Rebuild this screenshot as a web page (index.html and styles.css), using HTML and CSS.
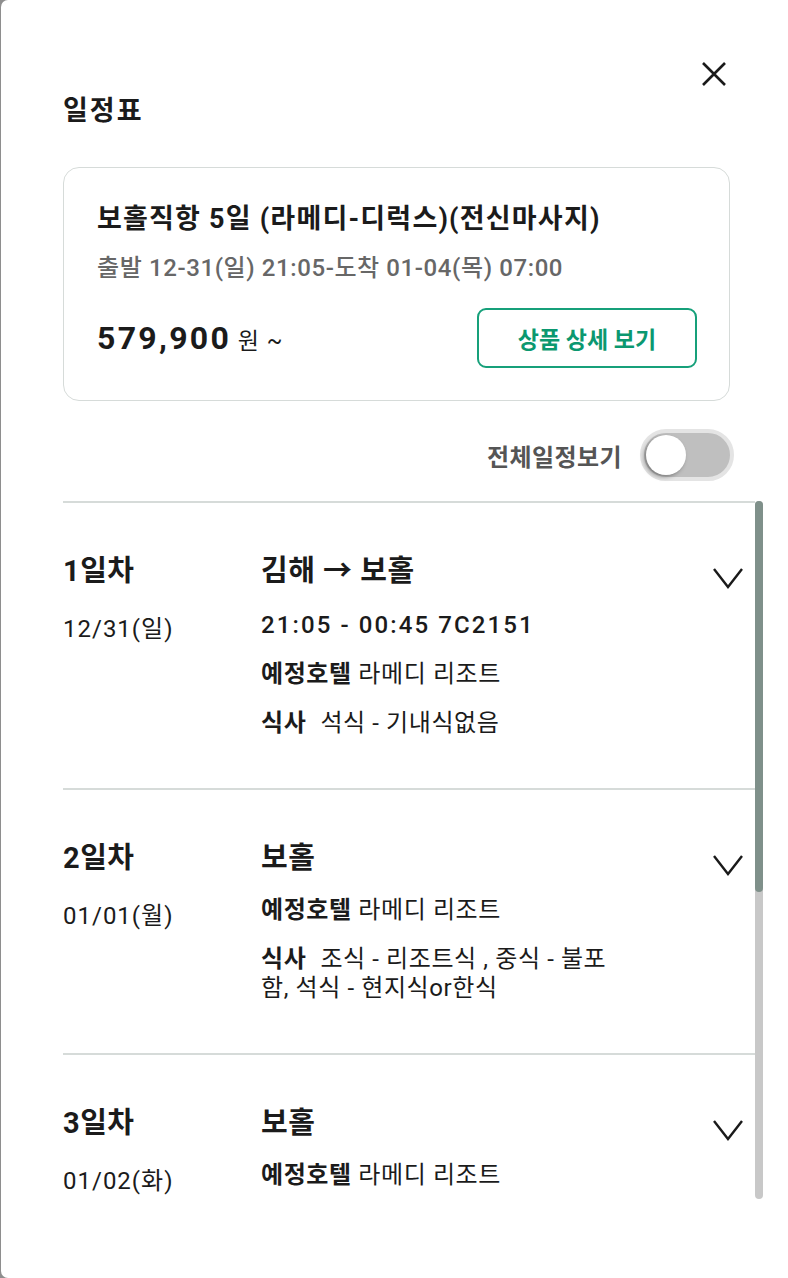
FILE: index.html
```html
<!DOCTYPE html>
<html lang="ko">
<head>
    <meta charset="utf-8">
    <title>일정표</title>
    <link rel="stylesheet" href="styles.css">
</head>
<body>
    <div class="sheet">
        <!-- 상단 헤더 -->
        <header class="sheet-head">
            <button class="close-btn" aria-label="닫기">
                <svg width="28" height="28" viewBox="0 0 28 28"><path d="M3 3L25 25M25 3L3 25" stroke="#1a1a1a" stroke-width="2.6" fill="none"/></svg>
            </button>
            <h1 class="sheet-title">일정표</h1>
        </header>

        <!-- 상품 카드 -->
        <section class="product-card">
            <h2 class="product-name">보홀직항 5일 (라메디-디럭스)(전신마사지)</h2>
            <p class="product-time">출발 12-31(일) 21:05-도착 01-04(목) 07:00</p>
            <div class="product-foot">
                <p class="price"><strong>579,900</strong> 원 ~</p>
                <a class="detail-btn" href="#">상품 상세 보기</a>
            </div>
        </section>

        <div class="toggle-row">
            <span class="toggle-label">전체일정보기</span>
            <span class="switch"><span class="knob"></span></span>
        </div>

        <!-- 일자별 일정 -->
        <div class="list-wrap">
            <div class="day-list">
                <div class="day">
                    <div class="day-when">
                        <div class="day-num">1일차</div>
                        <div class="day-date">12/31(일)</div>
                    </div>
                    <div class="day-body">
                        <div class="day-place">김해 → 보홀</div>
                        <div class="day-row flight">21:05 - 00:45 7C2151</div>
                        <div class="day-row"><b>예정호텔</b> 라메디 리조트</div>
                        <div class="day-row"><b class="meal">식사</b>석식 - 기내식없음</div>
                    </div>
                    <svg class="chevron" viewBox="0 0 32 26"><path d="M2 4L16 22L30 4" stroke="#1a1a1a" stroke-width="2.4" fill="none"/></svg>
                </div>
                <div class="day">
                    <div class="day-when">
                        <div class="day-num">2일차</div>
                        <div class="day-date">01/01(월)</div>
                    </div>
                    <div class="day-body">
                        <div class="day-place">보홀</div>
                        <div class="day-row"><b>예정호텔</b> 라메디 리조트</div>
                        <div class="day-row"><b class="meal">식사</b>조식 - 리조트식 , 중식 - 불포함, 석식 - 현지식or한식</div>
                    </div>
                    <svg class="chevron" viewBox="0 0 32 26"><path d="M2 4L16 22L30 4" stroke="#1a1a1a" stroke-width="2.4" fill="none"/></svg>
                </div>
                <div class="day">
                    <div class="day-when">
                        <div class="day-num">3일차</div>
                        <div class="day-date">01/02(화)</div>
                    </div>
                    <div class="day-body">
                        <div class="day-place">보홀</div>
                        <div class="day-row"><b>예정호텔</b> 라메디 리조트</div>
                    </div>
                    <svg class="chevron" viewBox="0 0 32 26"><path d="M2 4L16 22L30 4" stroke="#1a1a1a" stroke-width="2.4" fill="none"/></svg>
                </div>
            </div>
            <div class="scrollbar"><div class="scroll-thumb"></div></div>
        </div>
    </div>
</body>
</html>
```

FILE: styles.css
```css
/* 기본 */
* { box-sizing: border-box; }
body {
    margin: 0;
    background: #8e8e8e;
    font-family: Roboto, "Noto Sans CJK KR", sans-serif;
    color: #1b1b1b;
}
p, h1, h2 { margin: 0; }

.sheet {
    margin-left: 1px;
    height: 1278px;
    background: #fff;
    border-radius: 7px 0 0 7px;
    padding: 60px 58px 0 62px;
    overflow: hidden;
}

/* 헤더 */
.sheet-head {
    display: flex;
    flex-direction: column;
}
.close-btn {
    align-self: flex-end;
    width: 28px;
    height: 28px;
    padding: 0;
    border: 0;
    background: none;
    margin-right: 2px;
}
.close-btn svg { display: block; }
.sheet-title {
    margin-top: 5px;
    font-size: 27px;
    line-height: 36px;
    font-weight: 700;
    letter-spacing: 2px;
}

/* 상품 카드 */
.product-card {
    margin-top: 38px;
    border: 1.5px solid #d6dbd9;
    border-radius: 16px;
    padding: 33px 32px 32px 33px;
}
.product-name {
    font-size: 27px;
    line-height: 36px;
    font-weight: 700;
    letter-spacing: 1.2px;
}
.product-time {
    margin-top: 17px;
    font-size: 24px;
    line-height: 28px;
    font-weight: 500;
    letter-spacing: 0.6px;
    color: #676767;
}
.product-foot {
    margin-top: 26px;
    display: flex;
    align-items: center;
    justify-content: space-between;
}
.price {
    font-size: 23px;
    letter-spacing: 1px;
}
.price strong {
    font-size: 32px;
    font-weight: 700;
    letter-spacing: 2.3px;
}
.detail-btn {
    width: 220px;
    height: 60px;
    display: flex;
    align-items: center;
    justify-content: center;
    border: 2px solid #16a07a;
    border-radius: 9px;
    color: #0b9870;
    font-size: 23px;
    font-weight: 700;
    text-decoration: none;
}

/* 전체일정 토글 */
.toggle-row {
    margin-top: 28px;
    margin-right: -4px;
    display: flex;
    align-items: center;
    justify-content: flex-end;
    gap: 18px;
}
.toggle-label {
    font-size: 24px;
    font-weight: 700;
    letter-spacing: 0.4px;
    color: #555;
}
.switch {
    width: 94px;
    height: 52px;
    border-radius: 26px;
    border: 4px solid #e4e4e4;
    background: #bfbfbf;
    display: flex;
    align-items: center;
    padding-left: 2px;
}
.knob {
    width: 40px;
    height: 40px;
    border-radius: 50%;
    background: #fff;
    box-shadow: -2px 2px 4px rgba(0, 0, 0, 0.35);
}

/* 일정 목록 + 스크롤바 */
.list-wrap {
    margin-top: 20px;
    margin-right: -33px;
    height: 698px;
    display: flex;
}
.day-list {
    flex: 1;
    overflow: hidden;
}
.scrollbar {
    flex: 0 0 8px;
    background: #c8c8c8;
    border-radius: 4px;
}
.scroll-thumb {
    height: 391px;
    background: #7f908a;
    border-radius: 4px;
}

.day {
    display: flex;
    align-items: flex-start;
    border-top: 2px solid #d6dbd9;
    padding: 50px 11px 50px 0;
}
.day-when {
    flex: 0 0 198px;
}
.day-num, .day-place {
    font-size: 29px;
    line-height: 36px;
    font-weight: 700;
    letter-spacing: 0.5px;
}
.day-date {
    margin-top: 26px;
    font-size: 24px;
    line-height: 29px;
    letter-spacing: 1px;
}
.day-body {
    flex: 0 0 372px;
}
.day-row {
    margin-top: 20px;
    font-size: 24px;
    line-height: 29px;
    letter-spacing: 0.6px;
}
.day-row b { font-weight: 700; }
.day-row .meal { margin-right: 14px; }
.flight {
    margin-top: 22px;
    font-weight: 500;
    letter-spacing: 2.1px;
}
.chevron {
    margin-left: auto;
    margin-top: 12px;
    width: 32px;
    height: 26px;
}
```
